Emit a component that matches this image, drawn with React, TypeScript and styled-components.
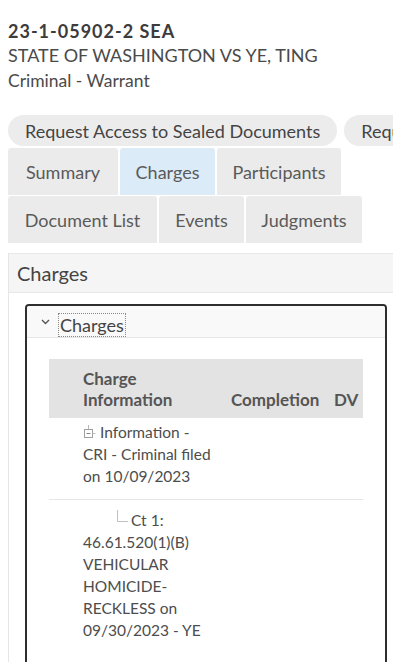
import React from 'react';
import styled, { createGlobalStyle } from 'styled-components';

const GlobalStyle = createGlobalStyle`
  html, body {
    margin: 0;
    padding: 0;
    background: #fff;
    overflow: hidden;
  }
  body {
    font-family: Lato, "Open Sans", sans-serif;
    color: #4a4a4a;
  }
`;

const Page = styled.div`
  width: 420px;
  padding: 21px 0 0 8px;
`;

const CaseHeader = styled.header`
  display: flex;
  flex-direction: column;
  gap: 2px;
  margin-bottom: 23px;
`;

const CaseNumber = styled.h1`
  margin: 0;
  font-size: 18px;
  font-weight: 700;
  letter-spacing: 1px;
  line-height: 21px;
  color: #3c3c3c;
`;

const CaseLine = styled.div<{ size?: number }>`
  font-size: ${(p) => p.size || 18}px;
  line-height: 23px;
  color: #4a4a4a;
`;

const ActionRow = styled.div`
  display: flex;
  gap: 7px;
  white-space: nowrap;
  margin-bottom: 2px;
`;

const Pill = styled.button`
  flex: none;
  height: 31px;
  padding: 0 17px;
  border: none;
  border-radius: 16px;
  background: #ececec;
  font-family: inherit;
  font-size: 18px;
  color: #444;
`;

const TabRow = styled.div`
  display: flex;
  gap: 2px;
  margin-bottom: 1px;
`;

const Tab = styled.div<{ active?: boolean; w: number }>`
  width: ${(p) => p.w}px;
  height: 47px;
  display: flex;
  align-items: center;
  justify-content: center;
  border-radius: 3px 3px 0 0;
  background: ${(p) => (p.active ? '#dcebf8' : '#ebebeb')};
  font-size: 18px;
  color: #5a5a5a;
`;

const Panel = styled.section`
  margin-top: 10px;
  border-left: 1px solid #e6e6e6;
  padding-bottom: 40px;
`;

const PanelHeader = styled.div`
  height: 38px;
  display: flex;
  align-items: center;
  padding-left: 8px;
  background: #f5f5f5;
  border-top: 1px solid #e8e8e8;
  border-bottom: 1px solid #e8e8e8;
  font-size: 20px;
  color: #444;
`;

const Box = styled.div`
  margin: 11px 0 0 16px;
  width: 358px;
  border: 2px solid #2e2e2e;
  border-radius: 4px;
  padding-bottom: 30px;
`;

const BoxHeader = styled.div`
  height: 31px;
  display: flex;
  align-items: center;
  gap: 9px;
  padding-left: 14px;
  background: #f9f9f9;
  border-bottom: 1px solid #e6e6e6;
  border-radius: 3px 3px 0 0;
`;

const BoxTitle = styled.span`
  font-size: 18px;
  line-height: 22px;
  color: #444;
  outline: 1px dotted #888;
  padding: 0 1px;
  margin-top: 6px;
`;

const Table = styled.table`
  margin: 21px 0 0 22px;
  width: 314px;
  table-layout: fixed;
  border-collapse: collapse;
  font-size: 15.5px;
  color: #4d4d4d;
`;

const Th = styled.th`
  background: #e3e3e3;
  text-align: left;
  vertical-align: bottom;
  padding: 9px 2px 8px 8px;
  font-weight: 700;
  font-size: 17px;
  line-height: 21px;
  color: #555;
`;

const Td = styled.td<{ last?: boolean }>`
  vertical-align: top;
  padding: ${(p) => (p.last ? '9px' : '3px')} 8px 12px 8px;
  line-height: 22px;
  border-bottom: ${(p) => (p.last ? 'none' : '1px solid #e6e6e6')};
`;

const Indent = styled.span`
  display: inline-block;
  width: 33px;
`;

const Chevron = () => (
  <svg width="9" height="6" viewBox="0 0 9 6">
    <path d="M1 1l3.5 3.5L8 1" fill="none" stroke="#555" strokeWidth="1.4" />
  </svg>
);

const CollapseIcon = () => (
  <svg width="13" height="14" viewBox="0 0 13 14" style={{ marginRight: 4, verticalAlign: '-1px' }}>
    <path d="M5.5 0v4" stroke="#b8b8b8" strokeWidth="1" />
    <rect x="1.5" y="4.5" width="8" height="8" fill="none" stroke="#a0a0a0" strokeWidth="1" />
    <path d="M3.5 8.5h4" stroke="#888" strokeWidth="1" />
    <path d="M9.5 8.5h3" stroke="#b8b8b8" strokeWidth="1" />
  </svg>
);

const BranchIcon = () => (
  <svg width="13" height="14" viewBox="0 0 13 14" style={{ marginRight: 2, verticalAlign: '2px' }}>
    <path d="M1.5 0v11.5H12" fill="none" stroke="#c0c0c0" strokeWidth="1" />
  </svg>
);

export default function App() {
  return (
    <>
      <GlobalStyle />
      <Page>
        <CaseHeader>
          <CaseNumber>23-1-05902-2 SEA</CaseNumber>
          <CaseLine>STATE OF WASHINGTON VS YE, TING</CaseLine>
          <CaseLine size={17.5}>Criminal - Warrant</CaseLine>
        </CaseHeader>

        <ActionRow>
          <Pill>Request Access to Sealed Documents</Pill>
          <Pill>Request Copies</Pill>
        </ActionRow>

        <TabRow>
          <Tab w={110}>Summary</Tab>
          <Tab w={95} active>
            Charges
          </Tab>
          <Tab w={124}>Participants</Tab>
        </TabRow>
        <TabRow>
          <Tab w={149}>Document List</Tab>
          <Tab w={85}>Events</Tab>
          <Tab w={116}>Judgments</Tab>
        </TabRow>

        <Panel>
          <PanelHeader>Charges</PanelHeader>
          <Box>
            <BoxHeader>
              <Chevron />
              <BoxTitle>Charges</BoxTitle>
            </BoxHeader>
            <Table>
              <colgroup>
                <col style={{ width: 26 }} />
                <col style={{ width: 148 }} />
                <col style={{ width: 103 }} />
                <col style={{ width: 37 }} />
              </colgroup>
              <thead>
                <tr>
                  <Th />
                  <Th>
                    Charge
                    <br />
                    Information
                  </Th>
                  <Th>Completion</Th>
                  <Th>DV</Th>
                </tr>
              </thead>
              <tbody>
                <tr>
                  <Td />
                  <Td>
                    <CollapseIcon />
                    Information - CRI - Criminal filed on 10/09/2023
                  </Td>
                  <Td />
                  <Td />
                </tr>
                <tr>
                  <Td last />
                  <Td last>
                    <Indent />
                    <BranchIcon />
                    Ct 1: 46.61.520(1)(B) VEHICULAR HOMICIDE-RECKLESS on 09/30/2023 - YE
                  </Td>
                  <Td last />
                  <Td last />
                </tr>
              </tbody>
            </Table>
          </Box>
        </Panel>
      </Page>
    </>
  );
}
